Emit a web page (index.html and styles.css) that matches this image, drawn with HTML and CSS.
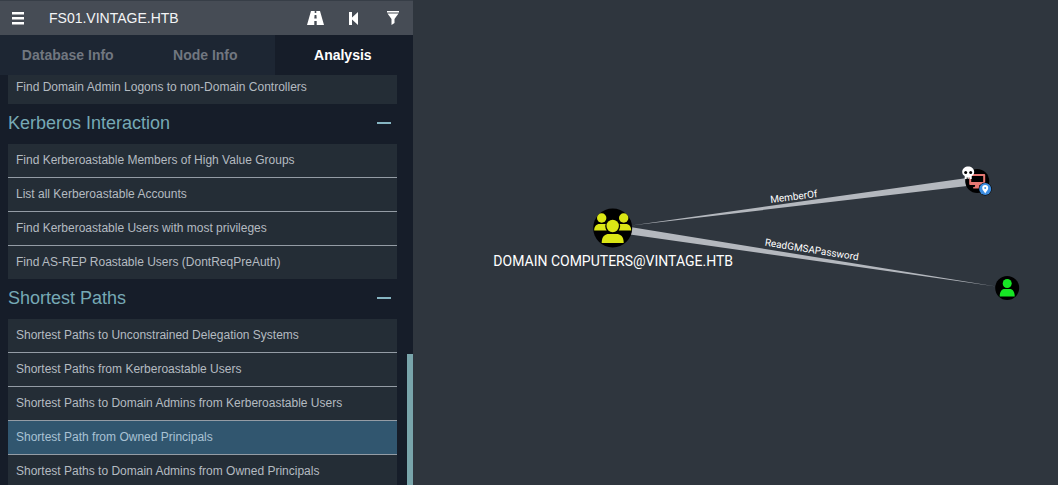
FILE: index.html
```
<!DOCTYPE html>
<html lang="en">
<head>
  <meta charset="UTF-8" />
  <meta name="viewport" content="width=device-width, initial-scale=1.0"/>
  <title>FS01.VINTAGE.HTB</title>
  <link rel="stylesheet" href="styles.css">
</head>
<body>
  <div class="app">
    <aside class="sidebar">
      <!-- Search bar -->
      <div class="searchbar">
        <button type="button" class="icon-btn" aria-label="Menu">
          <svg width="12" height="13" viewBox="0 0 12 13"><path d="M0 0h12v2.500H0zM0 5h12v2.500H0zM0 10h12v2.500H0z"/></svg>
        </button>
        <input type="text" class="search" aria-label="Search for a node" value="FS01.VINTAGE.HTB" />
        <button type="button" class="icon-btn" aria-label="Pathfinding">
          <svg width="17" height="14" viewBox="0 0 17 14"><path fill-rule="evenodd" d="M4 0h3.700v2h1.600V0H13l4 14H9.700v-4H7.300v4H0zM7.600 4l-.3 3.500h2.400L9.400 4z"/></svg>
        </button>
        <button type="button" class="icon-btn" aria-label="Back">
          <svg width="10" height="13" viewBox="0 0 10 13"><path d="M0 0h3v5.500L9 0v13L3 7.500V13H0z"/></svg>
        </button>
        <button type="button" class="icon-btn" aria-label="Filter">
          <svg width="12" height="14" viewBox="0 0 12 14"><path d="M0 0h12v1.500H0zM.5 2.500h11L7.500 8v4l-3 2V8z"/></svg>
        </button>
      </div>

      <!-- Tabs -->
      <div class="tabs">
        <button type="button" class="tab">Database Info</button>
        <button type="button" class="tab">Node Info</button>
        <button type="button" class="tab active">Analysis</button>
      </div>

      <div class="panel">
        <div class="queries">
          <div class="group">
            <button type="button" class="query">Find Domain Admin Logons to non-Domain Controllers</button>
          </div>

          <div class="group-header">
            <h2>Kerberos Interaction</h2>
            <button type="button" class="collapse" aria-label="Collapse Kerberos Interaction"></button>
          </div>
          <div class="group">
            <button type="button" class="query">Find Kerberoastable Members of High Value Groups</button>
            <button type="button" class="query">List all Kerberoastable Accounts</button>
            <button type="button" class="query">Find Kerberoastable Users with most privileges</button>
            <button type="button" class="query">Find AS-REP Roastable Users (DontReqPreAuth)</button>
          </div>

          <div class="group-header">
            <h2>Shortest Paths</h2>
            <button type="button" class="collapse" aria-label="Collapse Shortest Paths"></button>
          </div>
          <div class="group">
            <button type="button" class="query">Shortest Paths to Unconstrained Delegation Systems</button>
            <button type="button" class="query">Shortest Paths from Kerberoastable Users</button>
            <button type="button" class="query">Shortest Paths to Domain Admins from Kerberoastable Users</button>
            <button type="button" class="query selected">Shortest Path from Owned Principals</button>
            <button type="button" class="query">Shortest Paths to Domain Admins from Owned Principals</button>
          </div>
        </div>
        <div class="scrollbar"><div class="thumb"></div></div>
      </div>
    </aside>

    <main class="graph">
      <svg viewBox="0 0 645 485" role="img" aria-label="Attack path graph">
        <!-- Edges -->
        <g class="edge">
          <path d="M218 225.500L554 178v8z"/>
          <path d="M217 227v7.500L583 286.500z"/>
        </g>
        <text class="edge-label" transform="translate(381 200) rotate(-7)">MemberOf</text>
        <text class="edge-label" transform="translate(398 253) rotate(9)">ReadGMSAPassword</text>

        <!-- Group node -->
        <g transform="translate(199.500 228)">
          <circle r="19.500"/>
          <g class="group-icon">
            <circle cx="-11" cy="-10" r="4.700"/>
            <circle cx="11" cy="-10" r="4.700"/>
            <path d="M-18.500 2.500c0-4 2-6.500 5.500-6.500h7v6.500zM18.500 2.500c0-4-2-6.500-5.500-6.500h-7v6.500z"/>
            <circle class="cutout" cy="-2" r="7.500"/>
            <circle cy="-2" r="6.200"/>
            <path d="M-11 15c0-6.500 3-9 7.500-9h7c4.500 0 7.500 2.500 7.500 9z"/>
          </g>
        </g>
        <text class="node-label" x="200" y="266">DOMAIN COMPUTERS@VINTAGE.HTB</text>

        <!-- Computer node -->
        <g transform="translate(564 181)">
          <circle r="12"/>
          <path class="computer-icon" fill-rule="evenodd" d="M-7-7H7q1 0 1 1V3q0 1-1 1H2l.5 2H4v1.500h-8V6h1.500L-2 4h-5q-1 0-1-1v-9q0-1 1-1zM-6-5v6H6v-6z"/>
          <!-- Owned -->
          <g transform="translate(-9 -8)">
            <path class="skull" d="M-6-1c0-3.500 3-5.500 6-5.500S6-4.500 6-1c0 2-1 3-2.500 4v3h-2V4.500h-1V6h-1V4.500h-1V6h-2V3C-5 2-6 1-6-1z"/>
            <circle cx="-2.500" cy="-.5" r="1.500"/>
            <circle cx="2.500" cy="-.5" r="1.500"/>
          </g>
          <!-- Start node -->
          <g transform="translate(8 8)">
            <circle r="6.500"/>
            <circle class="start" r="6"/>
            <path class="pin" fill-rule="evenodd" d="M0 4.500C-1 2.500-3 1-3-1a3 3 0 0 1 6 0c0 2-2 3.500-3 5.500zM0-2a1 1 0 1 0 0 2a1 1 0 0 0 0-2z"/>
          </g>
        </g>

        <!-- User node -->
        <g transform="translate(594 288)">
          <circle r="12"/>
          <g class="user-icon">
            <circle cy="-4.500" r="4.500"/>
            <path d="M-7.500 8.500c0-5 2-7.500 5-7.500h5c3 0 5 2.500 5 7.500z"/>
          </g>
        </g>
      </svg>
    </main>
  </div>
</body>
</html>
```
FILE: styles.css
```
* {
  box-sizing: border-box;
}

body {
  margin: 0;
  font-family: "Liberation Sans", Arial, sans-serif;
  background-color: #2f363e;
}

button {
  border: none;
  padding: 0;
  background: none;
  font-family: inherit;
  cursor: pointer;
}

.app {
  display: flex;
  height: 100vh;
  overflow: hidden;
}

.sidebar {
  display: flex;
  flex-direction: column;
  width: 39%;
  min-width: 380px;
  background-color: #161d29;
}

/* Search bar */
.searchbar {
  display: flex;
  align-items: center;
  height: 35px;
  border-top: 1px solid #373e47;
  background-color: #464c55;
}

.icon-btn {
  display: flex;
  align-items: center;
  justify-content: center;
  width: 39px;
  height: 33px;
}

.icon-btn:first-child {
  width: 35px;
}

.icon-btn svg {
  fill: #fff;
}

.search {
  flex: 1;
  min-width: 0;
  padding: 0 14px;
  border: none;
  outline: none;
  background: none;
  color: #f3f4f6;
  font-family: inherit;
  font-size: 14px;
}

/* Tabs */
.tabs {
  display: flex;
  height: 40px;
}

.tab {
  flex: 1;
  padding-right: 2px;
  background-color: #1d2633;
  color: #717780;
  font-size: 14px;
  font-weight: bold;
}

.tab.active {
  background-color: #161d29;
  color: #fff;
}

/* Query list */
.panel {
  display: flex;
  flex: 1;
  min-height: 0;
}

.queries {
  flex: 1;
  margin-right: 10px;
  padding-left: 8px;
  overflow: hidden;
}

.group {
  background-color: #242d36;
}

.group:first-child {
  margin-top: -4px;
}

.query {
  display: block;
  width: 100%;
  height: 34px;
  padding: 0 8px 2px;
  border-bottom: 1px solid #949ca5;
  color: #b4bbc1;
  font-size: 12px;
  text-align: left;
}

.query:last-child {
  height: 33px;
  border-bottom: none;
}

.query.selected {
  background-color: #31566f;
  color: #a9c2d4;
}

.group-header {
  display: flex;
  align-items: center;
  justify-content: space-between;
  height: 40px;
  padding: 0 6px 2px 0;
}

.group-header h2 {
  margin: 0;
  color: #76a9b5;
  font-size: 18px;
  font-weight: normal;
}

.collapse {
  width: 14px;
  height: 2px;
  background-color: #86b5c2;
}

.scrollbar {
  display: flex;
  align-items: flex-end;
  width: 6px;
}

.thumb {
  width: 6px;
  height: 32%;
  background-color: #79a5ab;
}

/* Graph */
.graph {
  flex: 1;
  min-width: 0;
}

.graph svg {
  display: block;
  width: 100%;
  height: 100%;
}

.edge {
  fill: #b4b8be;
}

.edge-label,
.node-label {
  fill: #fff;
  font-family: Roboto, sans-serif;
  text-anchor: middle;
}

.edge-label {
  font-size: 10px;
}

.node-label {
  font-size: 14px;
}

.group-icon {
  fill: #dbe615;
}

.group-icon .cutout {
  fill: #000;
}

.computer-icon {
  fill: #e67873;
}

.skull,
.pin {
  fill: #fff;
}

.start {
  fill: #3d8de0;
}

.user-icon {
  fill: #17e625;
}
```
